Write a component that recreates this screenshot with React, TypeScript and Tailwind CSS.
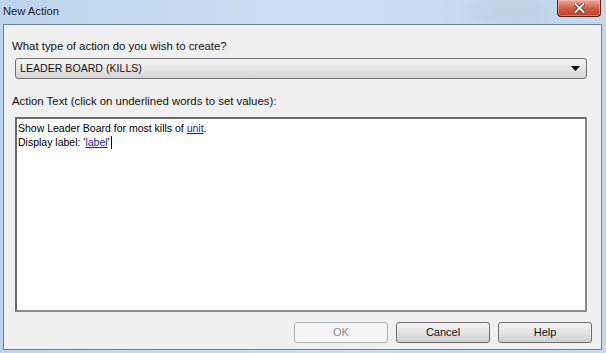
import React from "react";

export default function App() {
  const font = { fontFamily: '"Liberation Sans", Arial, sans-serif' };
  return (
    <div
      className="relative w-[606px] h-[353px] overflow-hidden bg-gradient-to-r from-[#bcd4ec] via-[#cde0f3] to-[#c3d8ee] flex flex-col"
      style={font}
    >
      {/* blur patch in title bar */}
      <div className="absolute left-[470px] top-[4px] w-[80px] h-[22px] rounded-full bg-[#b4bfca] opacity-50 blur-md" />
      {/* Title bar */}
      <div className="relative h-[24px] flex items-start shrink-0">
        <span className="pl-[3px] pt-[3px] text-[11.2px] text-[#1e1e1e] leading-[16px]">
          New Action
        </span>
        <div className="absolute left-[557px] top-0 w-[44px] h-[17px] rounded-b-[4px] border border-t-0 border-[#5a1f17] bg-gradient-to-b from-[#e9a99b] via-[#d2604a] to-[#c23b22] flex items-center justify-center shadow-[inset_0_0_0_1px_rgba(255,200,190,0.45)]">
          <svg width="11" height="10" viewBox="0 0 11 10">
            <path d="M1.5 1 L9.5 9 M9.5 1 L1.5 9" stroke="#3a1a14" strokeWidth="3.4" strokeLinecap="square" />
            <path d="M1.5 1 L9.5 9 M9.5 1 L1.5 9" stroke="#ffffff" strokeWidth="2" strokeLinecap="square" />
          </svg>
        </div>
      </div>

      {/* Client area */}
      <div className="relative ml-[3px] mr-[4px] mb-[3px] flex-1 border border-[#6f8299] bg-[#f0f0f0] flex flex-col">
        <div className="ml-[8px] mt-[14px] text-[11.4px] leading-[14px] text-[#111]">
          What type of action do you wish to create?
        </div>
        <div className="ml-[11px] mr-[14px] mt-[5px] h-[21px] rounded-[3px] border border-[#707070] bg-gradient-to-b from-[#f2f2f2] via-[#e6e6e6] to-[#d6d6d6] flex items-center px-[4px] text-[10.6px] text-[#111]">
          <span className="flex-1">LEADER BOARD (KILLS)</span>
          <svg width="9" height="5" viewBox="0 0 9 5" className="mr-[2px]">
            <path d="M0 0 H9 L4.5 5 Z" fill="#000" />
          </svg>
        </div>
        <div className="ml-[8px] mt-[15px] text-[11.4px] leading-[14px] text-[#111]">
          Action Text (click on underlined words to set values):
        </div>
        <div className="ml-[11px] mr-[14px] mt-[9px] h-[195px] border-2 border-t-[#6b6b6b] border-l-[#6b6b6b] border-r-[#8a8a8a] border-b-[#8a8a8a] bg-white px-[1px] pt-[2px] text-[10.5px] leading-[14px] text-black">
          <div>
            Show Leader Board for most kills of{" "}
            <span className="underline text-[#1c1c96]">unit</span>.
          </div>
          <div className="flex items-center">
            <span>Display label: '</span>
            <span className="underline text-[#1c1c96]">label</span>
            <span>'</span>
            <span className="inline-block w-[1px] h-[13px] bg-black ml-[1px]" />
          </div>
        </div>
        <div className="mt-[10px] flex justify-end gap-[8px] mr-[9px]">
          <div className="w-[94px] h-[21px] rounded-[3px] border border-[#adb2b5] bg-[#f4f4f4] flex items-center justify-center text-[11px] text-[#8d8d8d]">
            OK
          </div>
          <div className="w-[94px] h-[21px] rounded-[3px] border border-[#707070] bg-gradient-to-b from-[#f2f2f2] via-[#e4e4e4] to-[#d0d0d0] flex items-center justify-center text-[11px] text-[#111]">
            Cancel
          </div>
          <div className="w-[94px] h-[21px] rounded-[3px] border border-[#707070] bg-gradient-to-b from-[#f2f2f2] via-[#e4e4e4] to-[#d0d0d0] flex items-center justify-center text-[11px] text-[#111]">
            Help
          </div>
        </div>
      </div>
    </div>
  );
}
